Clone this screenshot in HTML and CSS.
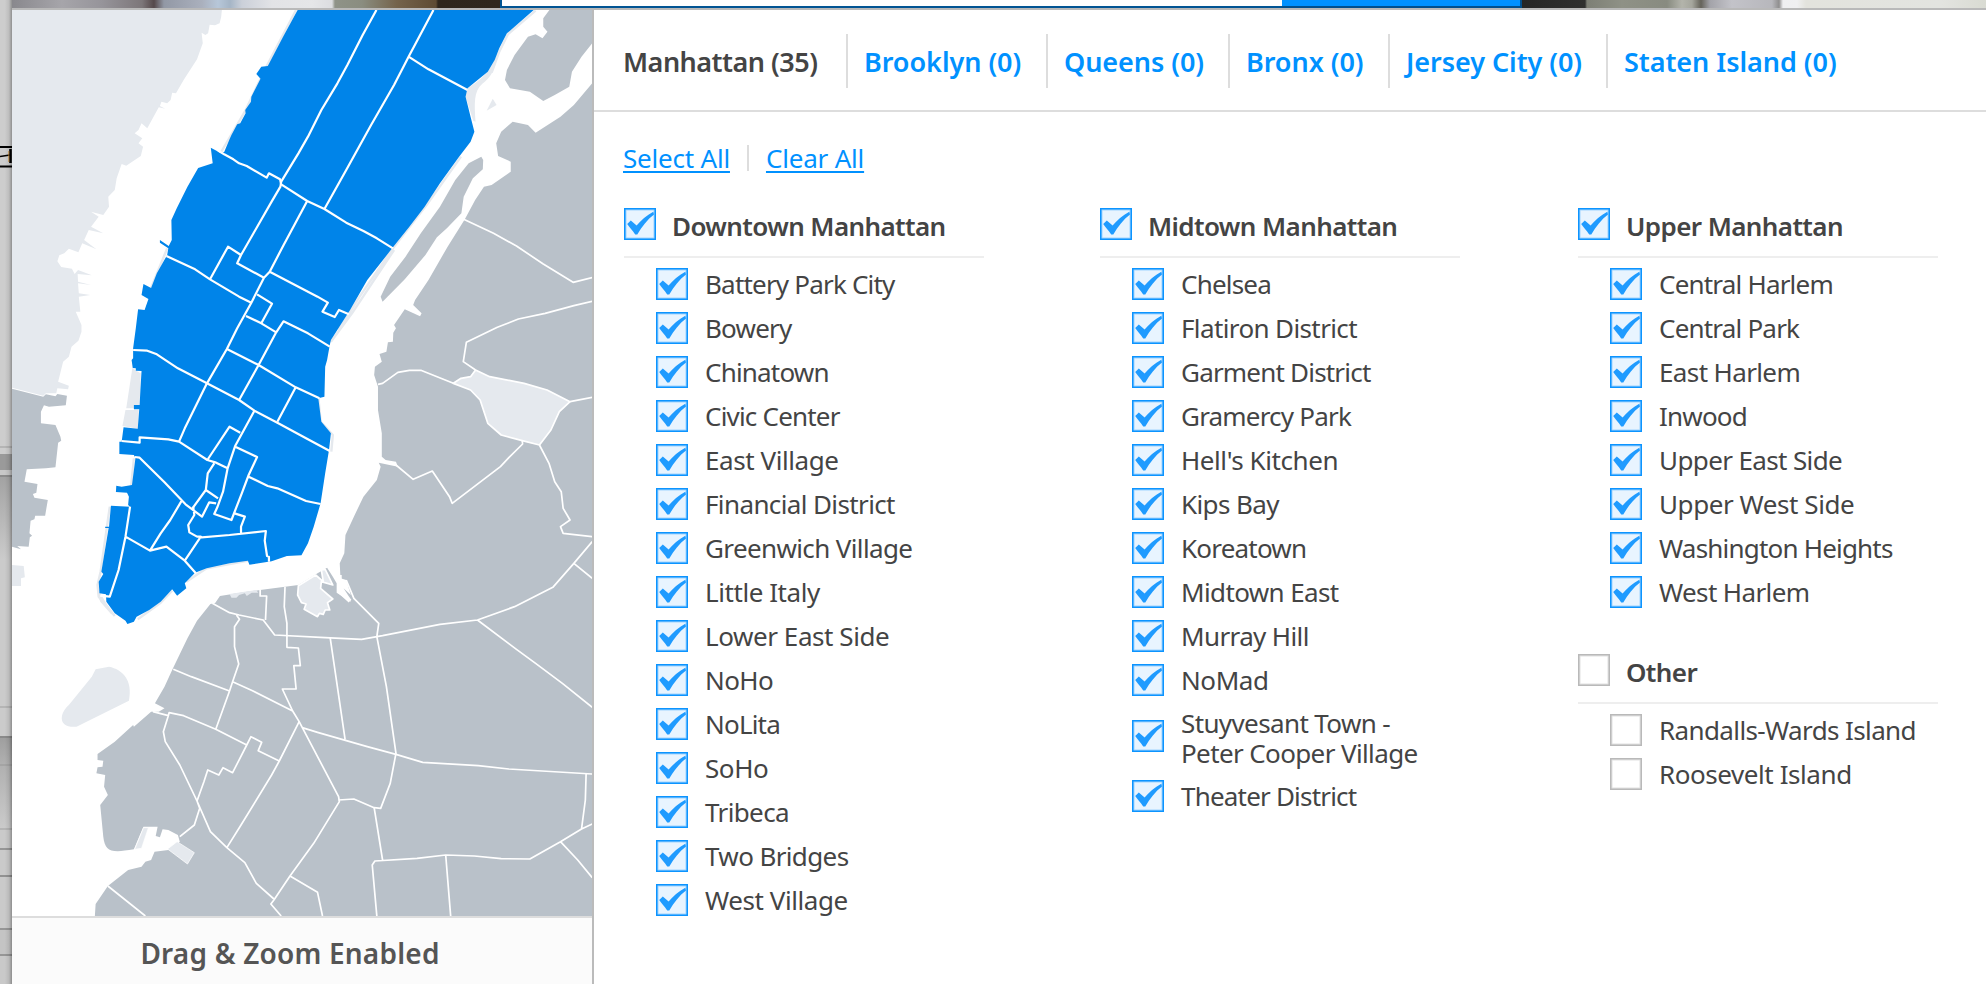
FILE: index.html
```html
<!DOCTYPE html>
<html lang="en">
<head>
<meta charset="utf-8">
<title>Select Neighborhoods</title>
<link rel="stylesheet" href="styles.css">
</head>
<body>
<svg class="symbols" width="0" height="0" aria-hidden="true">
  <symbol id="tick" viewBox="0 0 32 32"><path d="M3.200 16 6.800 12.600 12.600 17.600C17 12.500 22.500 7.300 29.300 3.800L30 6.500C23.500 11.500 17.800 18.600 13.300 26.500L11.200 26.500C8.500 22.500 5.500 19.200 3.200 16Z" fill="#1f9bff"/></symbol>
</svg>
<div class="page">
  <div class="backdrop">
    <svg class="clip" viewBox="0 0 12 26"><path d="M0 2H12M0 21.500H12" stroke="#000" stroke-width="2"/><path d="M0 11.500 10 10" stroke="#000" stroke-width="1.600"/><path d="M10.500 4V18" stroke="#000" stroke-width="2.600"/><path d="M8.800 6V17" stroke="#b9791f" stroke-width=".8"/></svg>
  </div>
  <div class="main">
    <div class="photo"><span class="photo-left"></span><span class="field"></span><span class="button"></span><span class="photo-right"></span></div>
    <div class="dialog">
      <aside class="map-panel">
        <svg class="map" viewBox="31.400 30 1516 2718" preserveAspectRatio="none">
          <rect x="31" y="30" width="1517" height="2718" fill="#fff"/>
          <g fill="#e5e9ee">
            <path d="M31 30H580L578 52 574 70 562 76 548 74 544 100 537 105 527 98 530 130 515 178 480 240 460 280 450 278 446 300 437 310 422 305 418 318 432 326 415 322 385 385 370 370 362 390 352 400 372 415 362 430 374 440 368 468 330 497 318 492 305 535 300 570 283 590 285 620 270 645 238 635 258 650 238 680 270 700 232 690 220 720 252 748 215 730 205 757 180 746 168 760 155 766 150 784 160 801 188 806 195 822 204 810 240 826 203 822 204 845 238 855 204 850 206 880 236 885 206 890 210 935 198 935 213 975 213 995 205 1022 187 1040 180 1070 165 1085 152 1145 180 1157 178 1168 150 1165 147 1180 120 1180 113 1187 31 1163Z"/>
            <path d="M31 1695 62 1698 65 1732 55 1735 55 1758 31 1758Z"/>
            <path d="M346 1104 357 1113 368 1120 365 1215 350 1215V1225H330ZM328 1230H363L360 1286 320 1278Z"/>
            <path d="M260 1775 255 1780 262 1805 290 1842 300 1845 277 1808Z"/>
            <path d="M1222 265C1255 240 1285 215 1300 155 1297 205 1285 230 1260 252 1238 275 1240 310 1243 365L1237 362 1217 290ZM1288 296 1298 315 1272 332Z"/>
            <path d="M250 2008 285 2000C320 2008 348 2040 337 2102L200 2180C150 2185 155 2140 180 2115L240 2030Z"/>
          </g>
          <g fill="#b9c1c9">
            <path d="M31 1166 113 1190 120 1183 145 1189 150 1182 175 1187 172 1216 128 1220 115 1216 107 1235V1270L145 1275 158 1310 160 1322 152 1328 145 1402 120 1405 70 1408 64 1445 98 1452 95 1478 86 1482 90 1493 125 1500 118 1547 92 1547 90 1558 80 1562 77 1600 84 1607 78 1612 75 1640 45 1638 55 1648 31 1640Z"/>
            <path d="M1436 30H1548V130L1520 170 1495 215 1488 260 1450 285 1420 303 1385 275 1333 265 1320 240 1325 210 1345 165 1380 110 1400 103 1418 115 1431 95 1420 80 1420 55Z"/>
            <path d="M1258 470 1263 480 1262 508 1236 535 1212 590 1206 640 1168 685 1142 712 1112 765 1058 838 1000 905 995 890 1020 830 1060 770 1100 700 1150 620 1190 540 1225 490Z"/>
            <path d="M1548 250 1500 315 1465 350 1400 398 1380 375 1340 365 1310 395 1297 430 1302 468 1335 485 1335 515 1285 555 1265 560 1242 600 1215 658 1170 740 1120 840 1085 900 1080 915 1102 940 1098 949 1058 928 1030 975 1035 985 1028 998 1027 1025 1014 1027 1010 1055 992 1062 998 1085 980 1100 978 1125 988 1160 988 1230 998 1300 998 1370 1008 1380 1035 1385 1040 1400 990 1388 995 1400 985 1440 950 1490 925 1550 903 1605 900 1660 888 1690 890 1735 905 1740 917 1785 898 1765 915 1795 917 1805 880 1778 880 1750 870 1730 855 1703 830 1720 780 1755 745 1760 680 1770 620 1780 575 1788 562 1810 550 1812 515 1862 490 1915 450 2010 430 2060 405 2110 430 2125 415 2135 395 2135 350 2180 348 2175 300 2225 255 2262 255 2280 270 2282 268 2300 255 2302 252 2320 275 2325 272 2360 282 2385 262 2415 270 2510C275 2555 290 2560 350 2548L375 2480H412L407 2508 418 2512 425 2488 440 2490 465 2505 470 2525 440 2550 404 2555 395 2580 380 2585 370 2600 335 2610 282 2658 250 2712 248 2748H1548Z"/>
          </g>
          <g fill="#e5e9ee">
            <path d="M375 2483H388L370 2545 352 2548ZM463 2525 508 2558 490 2592 438 2547Z" stroke="#fff" stroke-width="2"/>
            <path class="road" d="M780 1757 825 1725 845 1745 840 1710 850 1708 870 1755 840 1745 838 1765 870 1797 856 1808 862 1830 850 1830 845 1843 835 1840 830 1850 795 1828 800 1812 788 1808 778 1785Z"/>
            <path class="road" d="M1243 1110 1280 1130 1370 1150 1430 1170 1490 1205 1462 1235 1440 1290 1410 1335 1365 1322 1310 1305 1275 1270 1255 1200 1230 1170 1185 1150 1205 1135 1230 1130Z"/>
            <path d="M600 1782 605 1793 618 1793 625 1785 640 1780 645 1788 658 1778 675 1778 670 1770Z"/>
          </g>
          <path class="channel" d="M888 1725 V1775L915 1803"/>
          <path class="bank" d="M774 30 700 192 681 236 640 335 578 456M437 745 395 864M350 1375 338 1515M287 1520 263 1715 255 1755 258 1790 300 1848M360 1858 420 1808 450 1772M487 1745 540 1705 650 1682M832 1190 838 1265 870 1305 866 1355M885 990 940 890 1027 745 1115 615 1205 470M1030 750 920 940 865 1025M1400 32 1328 102 1305 155 1285 218"/>
          <path fill="#0084e9" d="M778 30 740 110 700 198 683 200 670 222 681 236 657 290 656 305 641 330 642 340 628 370 620 373 605 405 600 418 586 456 578 460 551 443 556 490 518 504 490 560 462 625 448 660 449 720 441 738 418 720V728L440 745 437 765 410 820 395 864 375 852 370 885 388 897 378 930 361 928 355 985 348 1045V1075L344 1080 347 1104 355 1105V1112L370 1113 367 1170 365 1215H350V1228H364L360 1286 323 1282 318 1325H312V1362L350 1365 354 1375 345 1455 318 1460 304 1457 303 1476 332 1478 337 1490 335 1515 340 1520 290 1517 285 1580H275V1584H284L265 1715 270 1722 258 1745 260 1780 277 1783 278 1805 300 1840 328 1862 333 1872 350 1865 357 1850 390 1830 420 1805 450 1768 463 1787 487 1765 483 1750 510 1718 540 1705 600 1690 648 1682 652 1694 710 1684 750 1668 788 1666 805 1630 820 1580 838 1510 850 1420 860 1350 865 1300 840 1265 832 1195 848 1190 850 1100 855 1080 862 1035 865 1020 890 975 915 930 960 840 1025 745 1070 680 1110 620 1150 550 1200 470 1230 425 1240 395 1230 350 1217 290 1222 265 1275 215 1293 180 1305 145 1325 100 1395 30Z"/>
          <g class="street">
            <path d="M984 30 948 105 908 195 882 250 840 330 805 410 780 460 735 545 733 560 710 605 630 765 620 790 690 833"/>
            <path d="M1133 30 1068 170 1030 255 970 375 905 510 848 627M1068 170 1120 208 1222 270"/>
            <path d="M570 452 586 463 610 478 625 490 645 498 697 533 703 520 732 538 735 553 803 603 848 627 905 668 950 693 985 715 1027 745"/>
            <path d="M803 603 740 738 705 815 690 833 657 908 620 985 593 1047 541 1150 483 1285 468 1325"/>
            <path d="M435 768 510 808 549 838 625 890 657 908M549 838 596 740 630 765M705 815 830 890 857 908 843 935 875 951 886 930 912 943"/>
            <path d="M672 883 711 911 683 970M643 948 683 970 722 997M862 1040 805 1000 741 964 722 997 676 1095 625 1200M593 1047 676 1095 773 1162 835 1195M773 1162 725 1265"/>
            <path d="M348 1050 385 1052 410 1063 465 1105 541 1150 625 1200 665 1232 725 1268 800 1315 862 1353"/>
            <path d="M318 1323 365 1328V1312L440 1318 468 1325 542 1380 565 1388 595 1405M665 1232 615 1337 595 1405 583 1475 568 1522 560 1542 605 1560 632 1480 650 1425 672 1371 615 1340M542 1380 600 1280 628 1298M560 1390 543 1420 538 1470 570 1495M538 1470 503 1525M650 1430 700 1458 725 1465 800 1503 838 1512"/>
            <path d="M352 1371 365 1373 430 1447 485 1513 528 1550 547 1507 565 1510M475 1502 445 1560 420 1600 392 1652 328 1610M340 1520 328 1610 310 1710 287 1790 262 1787M392 1652 435 1640 483 1682 512 1720M483 1682 525 1610 515 1610 495 1597 492 1575 508 1545 505 1520M520 1613 600 1605 695 1593 692 1622 698 1668 703 1670V1685M613 1540 640 1550 630 1580V1600"/>
          </g>
          <g class="road">
            <path d="M1212 658 1290 700 1350 738 1420 792 1498 847 1548 833M1548 904 1500 917 1425 940 1355 957 1300 982 1219 1027 1211 1085 1243 1110M988 1153 1000 1150 1040 1117 1070 1111H1100L1185 1150M1490 1205 1548 1192M1365 1322 1366 1332 1330 1373 1308 1400 1182 1510 1175 1490 1130 1413 1080 1438 1035 1395M1410 1335 1435 1390 1450 1445 1467 1475 1472 1525 1490 1560 1465 1580 1472 1600 1548 1610"/>
            <path d="M1548 1625 1500 1690 1445 1762 1345 1820 1248 1860 1150 1873 1000 1907 945 1918 850 1913 718 1905 688 1860 625 1845 600 1838 555 1810M1500 1690 1548 1735M1248 1860 1350 1948 1400 1990 1470 2050 1548 2122M905 1740 925 1795 990 1870 985 1910 1010 2060 1035 2260 1020 2350 995 2425 978 2423 925 2397 885 2400"/>
            <path d="M745 1760 743 1820 750 1870V1942L780 1944 785 1997H768L774 2067H738L765 2133 782 2165 885 2390 887 2405 820 2530 758 2628 716 2700 708 2712 735 2748M680 1770V1788H697L694 1860M618 1845 626 1858 613 1880V1940L624 1992 608 2045 600 2073 564 2188M453 2008 500 2030 600 2073M608 2045 660 2072 765 2133M863 1913 878 2030 902 2218M790 2183 830 2197 960 2240 1035 2263 1105 2287 1250 2297 1330 2307 1548 2322"/>
            <path d="M400 2135 440 2147 442 2138 480 2147 564 2188 645 2235 656 2210 684 2227 675 2252 730 2283M440 2147 427 2195 432 2225 470 2295 515 2403 550 2495 593 2543 640 2588 670 2650 716 2697M645 2235 608 2318 583 2303 572 2325 543 2310 533 2345 515 2403 522 2425 508 2475 470 2510M782 2165 730 2283 710 2325 630 2475 593 2543M758 2628 830 2677 843 2748M282 2658 380 2748"/>
            <path d="M978 2423 1000 2580M985 2748 973 2595 980 2583 1090 2575 1165 2565 1240 2568 1310 2576 1385 2577 1465 2525 1520 2487 1548 2472M1165 2565 1178 2748M1532 2322 1530 2400 1520 2487M1465 2525 1510 2580 1548 2633"/>
          </g>
        </svg>
        <div class="map-note">Drag &amp; Zoom Enabled</div>
      </aside>
      <section class="content">
        <nav class="tabs">
          <a class="tab active">Manhattan (35)</a><a class="tab">Brooklyn (0)</a><a class="tab">Queens (0)</a><a class="tab">Bronx (0)</a><a class="tab">Jersey City (0)</a><a class="tab">Staten Island (0)</a>
        </nav>
        <div class="actions"><a>Select All</a><span class="bar"></span><a>Clear All</a></div>
        <div class="columns">
          <div class="column">
            <h2 class="group"><svg class="box on"><use href="#tick"/></svg>Downtown Manhattan</h2>
            <ul class="items">
              <li class="snug"><svg class="box on"><use href="#tick"/></svg><span>Battery Park City</span></li>
              <li class="snug"><svg class="box on"><use href="#tick"/></svg><span>Bowery</span></li>
              <li class="snug"><svg class="box on"><use href="#tick"/></svg><span>Chinatown</span></li>
              <li class="snug"><svg class="box on"><use href="#tick"/></svg><span>Civic Center</span></li>
              <li class="loose"><svg class="box on"><use href="#tick"/></svg><span>East Village</span></li>
              <li><svg class="box on"><use href="#tick"/></svg><span>Financial District</span></li>
              <li><svg class="box on"><use href="#tick"/></svg><span>Greenwich Village</span></li>
              <li class="loose"><svg class="box on"><use href="#tick"/></svg><span>Little Italy</span></li>
              <li class="loose"><svg class="box on"><use href="#tick"/></svg><span>Lower East Side</span></li>
              <li><svg class="box on"><use href="#tick"/></svg><span>NoHo</span></li>
              <li class="snug"><svg class="box on"><use href="#tick"/></svg><span>NoLita</span></li>
              <li class="loose"><svg class="box on"><use href="#tick"/></svg><span>SoHo</span></li>
              <li><svg class="box on"><use href="#tick"/></svg><span>Tribeca</span></li>
              <li><svg class="box on"><use href="#tick"/></svg><span>Two Bridges</span></li>
              <li class="loose"><svg class="box on"><use href="#tick"/></svg><span>West Village</span></li>
            </ul>
          </div>
          <div class="column">
            <h2 class="group"><svg class="box on"><use href="#tick"/></svg>Midtown Manhattan</h2>
            <ul class="items">
              <li class="snug"><svg class="box on"><use href="#tick"/></svg><span>Chelsea</span></li>
              <li><svg class="box on"><use href="#tick"/></svg><span>Flatiron District</span></li>
              <li class="snug"><svg class="box on"><use href="#tick"/></svg><span>Garment District</span></li>
              <li class="snug"><svg class="box on"><use href="#tick"/></svg><span>Gramercy Park</span></li>
              <li class="loose"><svg class="box on"><use href="#tick"/></svg><span>Hell's Kitchen</span></li>
              <li><svg class="box on"><use href="#tick"/></svg><span>Kips Bay</span></li>
              <li class="snug"><svg class="box on"><use href="#tick"/></svg><span>Koreatown</span></li>
              <li><svg class="box on"><use href="#tick"/></svg><span>Midtown East</span></li>
              <li><svg class="box on"><use href="#tick"/></svg><span>Murray Hill</span></li>
              <li class="loose"><svg class="box on"><use href="#tick"/></svg><span>NoMad</span></li>
              <li class="double"><svg class="box on"><use href="#tick"/></svg><span>Stuyvesant Town -<br>Peter Cooper Village</span></li>
              <li class="snug"><svg class="box on"><use href="#tick"/></svg><span>Theater District</span></li>
            </ul>
          </div>
          <div class="column">
            <h2 class="group"><svg class="box on"><use href="#tick"/></svg>Upper Manhattan</h2>
            <ul class="items">
              <li class="snug"><svg class="box on"><use href="#tick"/></svg><span>Central Harlem</span></li>
              <li class="snug"><svg class="box on"><use href="#tick"/></svg><span>Central Park</span></li>
              <li><svg class="box on"><use href="#tick"/></svg><span>East Harlem</span></li>
              <li class="snug"><svg class="box on"><use href="#tick"/></svg><span>Inwood</span></li>
              <li><svg class="box on"><use href="#tick"/></svg><span>Upper East Side</span></li>
              <li class="loose"><svg class="box on"><use href="#tick"/></svg><span>Upper West Side</span></li>
              <li class="snug"><svg class="box on"><use href="#tick"/></svg><span>Washington Heights</span></li>
              <li><svg class="box on"><use href="#tick"/></svg><span>West Harlem</span></li>
            </ul>
            <h2 class="group other"><svg class="box"></svg>Other</h2>
            <ul class="items">
              <li><svg class="box"></svg><span>Randalls-Wards Island</span></li>
              <li class="loose"><svg class="box"></svg><span>Roosevelt Island</span></li>
            </ul>
          </div>
        </div>
      </section>
    </div>
  </div>
</div>
</body>
</html>
```
FILE: styles.css
```css
* { box-sizing: border-box; }
body {
  margin: 0;
  font-family: "Noto Sans", "Open Sans", sans-serif;
  font-size: 26px;
  color: #444;
  overflow: hidden;
}
.symbols { position: absolute; }
.page { display: flex; width: 1986px; height: 984px; background: #fff; }

/* Dimmed page showing at the left of the dialog */
.backdrop {
  width: 12px;
  flex: none;
  padding-top: 145px;
  background:
    linear-gradient(90deg, transparent 40%, rgba(0,0,0,.08) 75%, rgba(0,0,0,.3)),
    linear-gradient(#cdcdcd 0 446px, #b5b5b5 446px 448px, #cdcdcd 448px 454px, #9a9a9a 454px 470px, #c8c8c8 470px 475px, #8c8c8c 475px 477px, #a3a3a3 477px, #cbcbcb 560px 706px, #b5b5b5 706px 708px, #cbcbcb 708px 736px, #8a8a8a 736px 738px, #9f9f9f 738px, #b0b0b0 764px, #a4a4a4 764px 766px, #b1b1b1 766px, #cacaca 828px, #b5b5b5 828px 830px, #cacaca 830px 848px, #969696 848px 850px, #cacaca 850px 875px, #929292 875px 877px, #cacaca 877px 928px, #969696 928px 930px, #c4c4c4 930px 954px, #969696 954px 956px, #c9c9c9 956px);
}
.clip { display: block; width: 12px; height: 26px; }
.main { width: 1974px; flex: none; display: flex; flex-direction: column; }
.photo { display: flex; height: 8px; flex: none; }
.photo-left {
  width: 488px;
  background: linear-gradient(90deg, #89888d, #a6a5aa 50px, #96949a 90px, #7c7679 130px, #55484a 142px, #9298a5 152px, #aab0bd 190px, #b7c7d9 206px, #a5b5c6 218px, #cbd0d9 230px, #e2e3e6 260px, #e5e6e8 300px, #dcdde0 320px, #8f9388 323px, #8a8d80 350px, #74634b 385px, #5e4b33 424px, #2f261c 426px, #30271d);
}
.field { width: 782px; background: #fff; border-left: 2px solid #015493; border-bottom: 2px solid #015493; }
.button { width: 240px; background: #0091ff; border-bottom: 2px solid #014f8c; border-right: 2px solid #014f8c; }
.photo-right {
  flex: 1;
  background: linear-gradient(90deg, #252524, #30302f 63px, #7d7f75 65px, #8f9186 100px, #888b80 145px, #b3b4ab 160px, #a5a69d 170px, #65635a 179px, #a3a3a9 188px, #c3c3c9 210px, #b7b7bc 250px, #8f8e8e 257px, #efeff1 261px, #f0f0f1 275px, #e3e3dd 284px, #e3e4e0 420px, #d9dbd2);
}
.dialog { display: flex; flex: 1; min-height: 0; border-top: 2px solid #b9b9b9; background: #fff; }

/* Map */
.map-panel { width: 582px; flex: none; display: flex; flex-direction: column; border-right: 2px solid #bbb; }
.map { display: block; width: 580px; height: 906px; }
.street, .road, .bank, .channel { stroke: #fff; }
.street, .bank, .channel, g.road { fill: none; }
.street path, .road path, path.road, .bank, .channel { vector-effect: non-scaling-stroke; stroke-linejoin: round; }
.street { stroke-width: 2.2px; }
.road { stroke-width: 1.7px; }
.channel { stroke-width: 4px; }
.bank { stroke: #e5e9ee; stroke-width: 2.4px; }
.map-note {
  flex: 1;
  display: flex;
  align-items: center;
  justify-content: center;
  padding-right: 24px;
  padding-top: 4px;
  border-top: 2px solid #ddd;
  background: #fbfbfb;
  color: #555;
  font-size: 28px;
  font-weight: 600;
  letter-spacing: .2px;
}

/* Borough tabs */
.content { flex: 1; min-width: 0; }
.tabs {
  display: grid;
  grid-template-columns: 252px 200px 182px 160px 218px auto;
  height: 102px;
  padding-top: 24px;
  padding-left: 2px;
  border-bottom: 2px solid #ddd;
}
.tab {
  height: 54px;
  padding-left: 16px;
  line-height: 56px;
  border-right: 2px solid #ddd;
  color: #0091ff;
  font-size: 27px;
  font-weight: 600;
  letter-spacing: -.05px;
  white-space: nowrap;
}
.tab.active { padding-left: 27px; color: #444; letter-spacing: -.5px; }
.tab:last-child { border-right: 0; }

.actions { display: flex; align-items: center; height: 48px; margin-top: 22px; padding-left: 29px; color: #0091ff; letter-spacing: -.2px; }
.actions a { text-decoration: underline; text-decoration-thickness: 2px; text-underline-offset: 3px; }
.actions .bar { width: 2px; height: 26px; margin: 0 17px; background: #ddd; }

/* Neighborhood lists */
.columns { display: flex; padding-left: 30px; }
.column { width: 360px; }
.column:first-child { margin-right: 116px; }
.column:nth-child(2) { margin-right: 118px; }
.group {
  display: flex;
  align-items: center;
  gap: 16px;
  height: 76px;
  margin: 0;
  padding-top: 14px;
  border-bottom: 2px solid #eee;
  font-size: 26px;
  font-weight: 600;
  letter-spacing: -.6px;
  white-space: nowrap;
}
.group .box { margin-bottom: 4px; }
.group.other { margin-top: 14px; }
.items { list-style: none; margin: 0; padding: 4px 0 0 32px; }
.items li { display: flex; align-items: center; gap: 17px; height: 44px; line-height: 30px; letter-spacing: -.62px; white-space: nowrap; }
.items .snug { letter-spacing: -.8px; }
.items .loose { letter-spacing: -.43px; }
.items .double { height: 72px; }
.items .double .box { margin-bottom: 4px; }
.box {
  width: 32px;
  height: 32px;
  flex: none;
  background: #fff;
  box-shadow: inset 0 0 0 1.500px #b9b9b9, inset 0 0 0 2.500px #e2e2e2;
}
.box.on { background: #e8f4ff; box-shadow: inset 0 0 0 1.500px #0c94ff, inset 0 0 0 2.500px #9fd3ff; }
```
